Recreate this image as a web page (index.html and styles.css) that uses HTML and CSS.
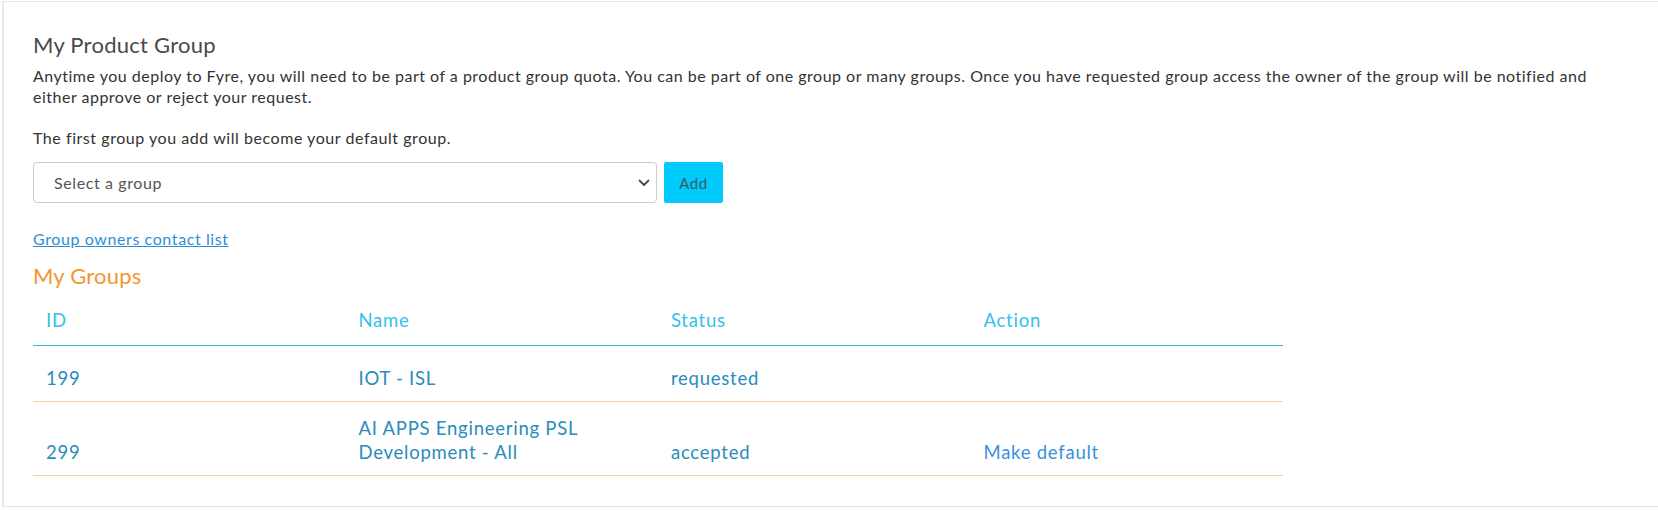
FILE: index.html
```html
<!DOCTYPE html>
<html lang="en">
<head>
<meta charset="utf-8">
<title>My Product Group</title>
<link rel="stylesheet" href="styles.css">
</head>
<body>
<div class="card">
  <h2 class="title">My Product Group</h2>
  <p class="intro">Anytime you deploy to Fyre, you will need to be part of a product group quota. You can be part of one group or many groups. Once you have requested group access the owner of the group will be notified and either approve or reject your request.</p>
  <p class="intro note">The first group you add will become your default group.</p>
  <div class="add-row">
    <div class="select-wrap">
      <select class="group-select">
        <option>Select a group</option>
      </select>
      <svg class="chevron" width="12" height="8" viewBox="0 0 12 8"><path d="M1.5 1.5 L6 6 L10.5 1.5" fill="none" stroke="#4a4a4a" stroke-width="1.8" stroke-linecap="round" stroke-linejoin="round"/></svg>
    </div>
    <button class="add-btn">Add</button>
  </div>
  <a class="contact-link" href="#">Group owners contact list</a>
  <h3 class="groups-title">My Groups</h3>
  <table class="groups">
    <thead>
      <tr><th>ID</th><th>Name</th><th>Status</th><th>Action</th></tr>
    </thead>
    <tbody>
      <tr><td>199</td><td>IOT - ISL</td><td>requested</td><td></td></tr>
      <tr><td>299</td><td>AI APPS Engineering PSL Development - All</td><td>accepted</td><td><a class="action-link" href="#">Make default</a></td></tr>
    </tbody>
  </table>
</div>
</body>
</html>
```
FILE: styles.css
```css
* { box-sizing: border-box; }
html, body { margin: 0; padding: 0; background: #fff; }
body { font-family: Lato, "Open Sans", sans-serif; color: #333; }

.card {
  margin: 1px 0 0 2px;
  border: 1px solid #e4e4e4;
  border-left: 2px solid #e8e8e8;
  border-right: none;
  padding: 31px 30px 30px 29px;
  height: 506px;
}

.title {
  margin: 0;
  font-size: 22px;
  line-height: 24px;
  font-weight: 400;
  letter-spacing: 0.25px;
  color: #4a4a4a;
}

.intro {
  margin: 8px 0 20px;
  font-size: 16px;
  line-height: 21px;
  letter-spacing: 0.5px;
  color: #333;
  padding-right: 20px;
}
.intro.note { margin: 0 0 14px; letter-spacing: 0.55px; }

.add-row { display: flex; gap: 7px; align-items: stretch; }
.select-wrap { position: relative; width: 624px; }
.group-select {
  -webkit-appearance: none;
  appearance: none;
  width: 100%;
  height: 41px;
  border: 1px solid #cdcdcd;
  border-radius: 4px;
  background: #fff;
  padding: 0 30px 0 20px;
  font-family: Lato, sans-serif;
  font-size: 16px;
  letter-spacing: 0.6px;
  color: #555;
}
.chevron { position: absolute; right: 7px; top: 17px; }
.add-btn {
  width: 59px;
  height: 41px;
  border: none;
  border-radius: 2px;
  background: #00cbff;
  color: #3b5864;
  font-family: Lato, sans-serif;
  font-size: 15px;
  letter-spacing: 0.5px;
  padding: 0;
}

.contact-link {
  display: inline-block;
  margin-top: 25px;
  font-size: 16px;
  line-height: 21px;
  letter-spacing: 0.6px;
  color: #2b8fd8;
  text-decoration: underline;
}

.groups-title {
  margin: 14px 0 6px;
  font-size: 22px;
  line-height: 25px;
  font-weight: 400;
  letter-spacing: 0.2px;
  color: #f5962b;
}

.groups {
  width: 1250px;
  table-layout: fixed;
  border-collapse: collapse;
  font-size: 18.5px;
  line-height: 24px;
  letter-spacing: 0.75px;
}
.groups th {
  text-align: left;
  font-weight: 400;
  color: #35bfec;
  padding: 14px 13px 13px;
  border-bottom: 1px solid #3bbad8;
  vertical-align: bottom;
}
.groups td {
  height: 56px;
  color: #2a8cba;
  padding: 14px 13px 11px;
  border-bottom: 1px solid #f4d59c;
  vertical-align: bottom;
}
.action-link { color: #3b8fe0; text-decoration: none; }
```
